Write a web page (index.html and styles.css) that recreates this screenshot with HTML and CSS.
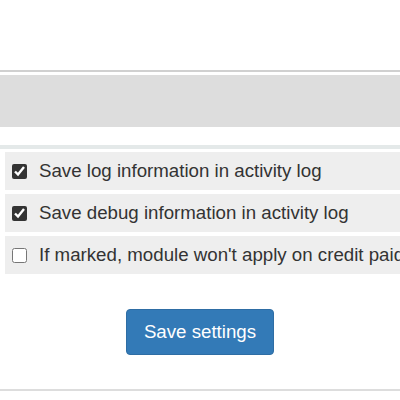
FILE: index.html
```html
<!DOCTYPE html>
<html>
<head>
<meta charset="utf-8">
<link rel="stylesheet" href="styles.css">
</head>
<body>
<div class="page">
  <div class="top-space"></div>
  <div class="rule"></div>
  <div class="header-bar"></div>
  <div class="band"></div>
  <div class="options">
    <label class="opt"><input type="checkbox" checked><span>Save log information in activity log</span></label>
    <label class="opt"><input type="checkbox" checked><span>Save debug information in activity log</span></label>
    <label class="opt"><input type="checkbox"><span>If marked, module won't apply on credit paid invoices</span></label>
  </div>
  <div class="actions">
    <button class="btn-primary">Save settings</button>
  </div>
  <div class="bottom-rule"></div>
</div>
</body>
</html>
```
FILE: styles.css
```css
html, body {
  margin: 0;
  padding: 0;
  background: #fff;
  overflow: hidden;
}
.page {
  width: 400px;
  height: 400px;
  font-family: "Liberation Sans", Arial, sans-serif;
  color: #333;
  display: flex;
  flex-direction: column;
}
.top-space {
  height: 70px;
  flex: none;
}
.rule {
  height: 2px;
  background: #d0d0d0;
  margin-bottom: 3px;
  flex: none;
}
.header-bar {
  height: 52px;
  background: #dddddd;
  margin-bottom: 18px;
  flex: none;
}
.band {
  height: 4px;
  background: #e4e9e9;
  margin-bottom: 3px;
  flex: none;
}
.options {
  display: flex;
  flex-direction: column;
  gap: 4px;
  margin-left: 5px;
  flex: none;
}
.opt {
  height: 38px;
  background: #eeeeee;
  display: flex;
  align-items: center;
  white-space: nowrap;
  overflow: hidden;
  font-size: 18.7px;
}
.opt input {
  width: 15px;
  height: 15px;
  margin: 0 12px 0 7px;
  flex: none;
  accent-color: #333;
}
.actions {
  display: flex;
  justify-content: center;
  align-items: flex-start;
  padding-top: 35px;
  height: 115px;
  box-sizing: border-box;
  flex: none;
}
.btn-primary {
  background: #337ab7;
  border: 1px solid #2e6da4;
  color: #fff;
  font-family: "Liberation Sans", Arial, sans-serif;
  font-size: 18.7px;
  line-height: 24px;
  padding: 10px 0;
  border-radius: 4px;
  height: 46px;
  width: 148px;
}
.bottom-rule {
  height: 2px;
  background: #dddddd;
  flex: none;
}
```
